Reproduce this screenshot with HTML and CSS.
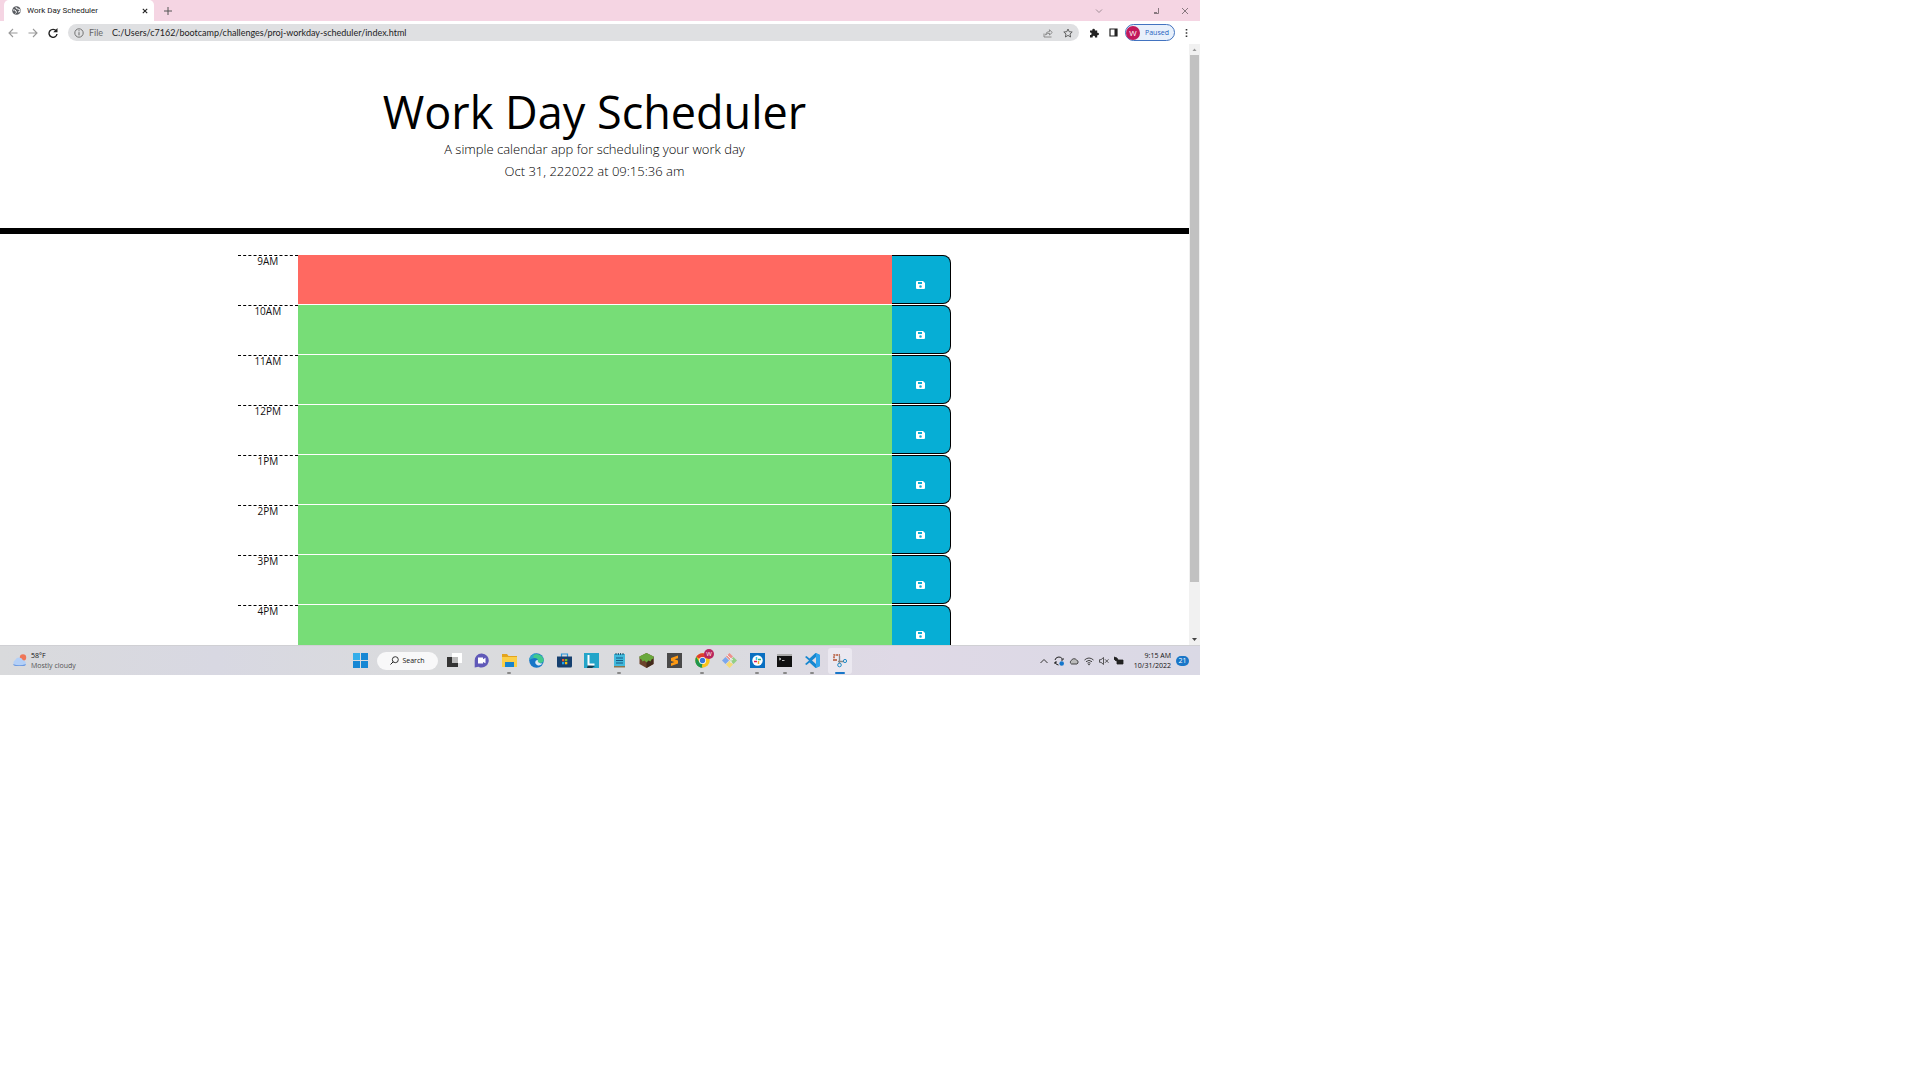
FILE: index.html
```html
<!DOCTYPE html>
<html lang="en">
<head>
<meta charset="utf-8">
<title>Work Day Scheduler</title>
<link rel="stylesheet" href="styles.css">
</head>
<body>
<svg class="defs" aria-hidden="true">
  <symbol id="save" viewBox="0 0 9 8"><path fill="#fff" fill-rule="evenodd" d="M1 0H7L9 2V7Q9 8 8 8H1Q0 8 0 7V1Q0 0 1 0ZM2 1V3H6V1ZM4.500 4.200A1.300 1.300 0 1 0 4.500 6.800A1.300 1.300 0 1 0 4.500 4.200Z"/></symbol>
</svg>
<div class="desktop">
  <div class="tabbar">
    <div class="tab">
      <svg class="i9" viewBox="0 0 9 9"><circle cx="4.500" cy="4.500" r="4.300" fill="#5a5d62"/><path d="M1 4Q3 3.500 4 5T3.500 7.500M4 1Q3.500 3 6 3T8 5.500L6 6" fill="none" stroke="#fff" stroke-width="1"/></svg>
      <span class="tab-title">Work Day Scheduler</span>
      <button class="plain" aria-label="Close tab"><svg class="i6" viewBox="0 0 6 6"><path d="M.8.8l4.400 4.400M5.200.8L.8 5.200" stroke="#222" stroke-width="1.100"/></svg></button>
    </div>
    <button class="plain new-tab" aria-label="New tab"><svg class="i8" viewBox="0 0 8 8"><path d="M4 0v8M0 4h8" stroke="#555" stroke-width="1"/></svg></button>
    <div class="window-buttons">
      <button class="plain" aria-label="Tab search"><svg class="i8" viewBox="0 0 8 8"><path d="M1 2.500l3 3 3-3" fill="none" stroke="#97868e" stroke-width=".9"/></svg></button>
      <button class="plain restore" aria-label="Restore"><svg class="i8" viewBox="0 0 8 8"><path d="M2 6.500h4.500V1M2 5.500h3" fill="none" stroke="#7c6d74" stroke-width=".9"/></svg></button>
      <button class="plain" aria-label="Close"><svg class="i8" viewBox="0 0 8 8"><path d="M1 1l6 6M7 1L1 7" stroke="#7c6d74" stroke-width=".9"/></svg></button>
    </div>
  </div>
  <div class="toolbar">
    <div class="nav">
      <button class="plain" aria-label="Back"><svg class="i10" viewBox="0 0 10 10"><path d="M9.500 5H1M5 1L1 5l4 4" fill="none" stroke="#999" stroke-width="1.100"/></svg></button>
      <button class="plain" aria-label="Forward"><svg class="i10" viewBox="0 0 10 10"><path d="M.5 5H9M5 1l4 4-4 4" fill="none" stroke="#999" stroke-width="1.100"/></svg></button>
      <button class="plain" aria-label="Reload"><svg class="i10" viewBox="0 0 10 10"><path d="M8.300 3A4 4 0 1 0 9 6" fill="none" stroke="#222" stroke-width="1.400"/><path d="M9.500 0v4.300H5.200z" fill="#222"/></svg></button>
    </div>
    <div class="address">
      <svg class="i10" viewBox="0 0 10 10"><circle cx="5" cy="5" r="4.200" fill="none" stroke="#666" stroke-width=".9"/><path d="M5 4.200v3.200M5 2.300v1" stroke="#666" stroke-width="1"/></svg>
      <span class="scheme">File</span>
      <input class="url" aria-label="Address" value="C:/Users/c7162/bootcamp/challenges/proj-workday-scheduler/index.html">
      <div class="page-actions">
        <svg class="i10" viewBox="0 0 10 10"><path d="M1 5.500V9h7.500M2.500 7Q3 3.500 6.500 3.500V1.700L9.200 4.500 6.500 7V5.300Q4 5.200 2.500 7Z" fill="none" stroke="#777" stroke-width=".8"/></svg>
        <svg class="i10" viewBox="0 0 10 10"><path d="M5 1l1.200 2.700 3 .3-2.200 2 .6 3L5 7.400 2.400 9 3 6 .8 4l3-.3z" fill="none" stroke="#555" stroke-width=".9"/></svg>
      </div>
    </div>
    <div class="extensions">
      <svg class="i10" viewBox="0 0 10 10"><path d="M1 2.500h2.300V2a1.300 1.300 0 0 1 2.600 0v.5h2.300v2.200h.5a1.200 1.200 0 0 1 0 2.500h-.5v2.300H6V9a1.200 1.200 0 0 0-2.400 0v.5H1V7h.4a1.200 1.200 0 0 0 0-2.400H1z" fill="#222"/></svg>
      <svg class="i9" viewBox="0 0 9 9"><path d="M1 1h7v7H1z" fill="none" stroke="#222" stroke-width="1.200"/><path d="M5.500 1H8v7H5.500z" fill="#222"/></svg>
    </div>
    <button class="profile"><span class="avatar">W</span>Paused</button>
    <button class="plain" aria-label="Menu"><svg class="dots" viewBox="0 0 3 10"><path d="M.7 1h1.600v1.600H.7zM.7 4.200h1.600v1.600H.7zM.7 7.400h1.600V9H.7z" fill="#333"/></svg></button>
  </div>
  <div class="viewport">
    <main class="page">
      <header class="hero">
        <h1>Work Day Scheduler</h1>
        <p>A simple calendar app for scheduling your work day</p>
        <p>Oct 31, 222022 at 09:15:36 am</p>
      </header>
      <div class="planner">
        <div class="row"><label class="hour" for="h9">9AM</label><textarea class="task now" id="h9"></textarea><button class="save" aria-label="Save 9AM"><svg class="disk"><use href="#save"/></svg></button></div>
        <div class="row"><label class="hour" for="h10">10AM</label><textarea class="task" id="h10"></textarea><button class="save" aria-label="Save 10AM"><svg class="disk"><use href="#save"/></svg></button></div>
        <div class="row"><label class="hour" for="h11">11AM</label><textarea class="task" id="h11"></textarea><button class="save" aria-label="Save 11AM"><svg class="disk"><use href="#save"/></svg></button></div>
        <div class="row"><label class="hour" for="h12">12PM</label><textarea class="task" id="h12"></textarea><button class="save" aria-label="Save 12PM"><svg class="disk"><use href="#save"/></svg></button></div>
        <div class="row"><label class="hour" for="h13">1PM</label><textarea class="task" id="h13"></textarea><button class="save" aria-label="Save 1PM"><svg class="disk"><use href="#save"/></svg></button></div>
        <div class="row"><label class="hour" for="h14">2PM</label><textarea class="task" id="h14"></textarea><button class="save" aria-label="Save 2PM"><svg class="disk"><use href="#save"/></svg></button></div>
        <div class="row"><label class="hour" for="h15">3PM</label><textarea class="task" id="h15"></textarea><button class="save" aria-label="Save 3PM"><svg class="disk"><use href="#save"/></svg></button></div>
        <div class="row"><label class="hour" for="h16">4PM</label><textarea class="task" id="h16"></textarea><button class="save" aria-label="Save 4PM"><svg class="disk"><use href="#save"/></svg></button></div>
      </div>
    </main>
    <div class="scrollbar">
      <svg class="arrow" viewBox="0 0 11 11"><path d="M3.500 7h4L5.500 4.500z" fill="#999"/></svg>
      <div class="track"><div class="thumb"></div></div>
      <svg class="arrow" viewBox="0 0 11 11"><path d="M3 4h5L5.500 7z" fill="#444"/></svg>
    </div>
  </div>
  <footer class="taskbar">
    <div class="weather">
      <svg class="i15" viewBox="0 0 15 15"><circle cx="11" cy="4.500" r="3.200" fill="#ef7657"/><path d="M3.500 13A3.300 3.300 0 0 1 3.200 7 4.300 4.300 0 0 1 11 7.200 3 3 0 0 1 12 13Z" fill="#b4d0f7"/><path d="M1 11Q7 13.500 14 11 13.500 13 12 13H3.500Q1.500 13 1 11" fill="#6d9ae0"/></svg>
      <div><div class="temp">58°F</div><div class="sky">Mostly cloudy</div></div>
    </div>
    <div class="apps">
      <button class="plain" aria-label="Start"><svg class="i15" viewBox="0 0 15 15"><path d="M0 0h7v7H0zM8 0h7v7H8zM0 8h7v7H0zM8 8h7v7H8z" fill="#1687d4"/><path d="M0 0h7v7H0z" fill="#35aeea"/></svg></button>
      <button class="search"><svg class="i9" viewBox="0 0 9 9"><circle cx="5.300" cy="3.700" r="3" fill="none" stroke="#222" stroke-width=".9"/><path d="M3.200 5.800L.5 8.500" stroke="#222"/></svg>Search</button>
      <div class="icons">
        <button class="app" aria-label="Task view"><svg class="i15" viewBox="0 0 15 15"><path d="M5 0h10v10H5z" fill="#fff"/><path d="M0 4h11v10H0z" fill="#333"/><path d="M5 4h6v6H5z" fill="#bbb"/></svg></button>
        <button class="app" aria-label="Chat"><svg class="i15" viewBox="0 0 15 15"><path d="M7.500.5a7 7 0 1 1-3 13.200L.7 14.500V8A7 7 0 0 1 7.500.5Z" fill="#6059b8"/><path d="M4 4.500h5v1.700l2.500-1.400v5.500L9 9v1.500H4z" fill="#fff"/></svg></button>
        <button class="app open" aria-label="File Explorer"><svg class="i15" viewBox="0 0 15 15"><path d="M0 1h5l1.500 2H15v11H0z" fill="#e4a41d"/><path d="M0 4h15v10H0z" fill="#fbcf48"/><path d="M3 9h9v5H3z" fill="#1583cf"/></svg></button>
        <button class="app" aria-label="Edge"><svg class="i15" viewBox="0 0 15 15"><circle cx="7.500" cy="7.500" r="7.300" fill="#1676c8"/><path d="M.4 7A7.300 7.300 0 0 1 14.800 7Q14.500 10 11 10 8.500 10 9 8 9 5 5.500 5T.4 7Z" fill="#42ca8c"/><path d="M.4 7A7 7 0 0 1 7 .3Q3 3 5 5 2 5 .4 7" fill="#2ea7cf"/><path d="M9 7.500Q8 10 13.500 10.500 11 13.500 8 12 5 10 7 7.500Q8.500 6.500 9 7.500" fill="#dce9f2"/></svg></button>
        <button class="app" aria-label="Store"><svg class="i15" viewBox="0 0 15 15"><path d="M4.500 4V1h6v3" fill="none" stroke="#2795d9" stroke-width="1.200"/><path d="M0 3.500h15V13q0 1.500-1.500 1.500h-12Q0 14.500 0 13z" fill="#16406f"/><path d="M5 6h2.300v2.300H5z" fill="#f15a2b"/><path d="M8 6h2.300v2.300H8z" fill="#7cbb2a"/><path d="M5 9h2.300v2.300H5z" fill="#1ea5e9"/><path d="M8 9h2.300v2.300H8z" fill="#fbbc0a"/></svg></button>
        <button class="app" aria-label="L"><svg class="i15" viewBox="0 0 15 15"><path d="M0 0h15v15H0z" fill="#23a5c9"/><path d="M4 11.500l7 1.500-3 2H3z" fill="#153e52"/><path d="M4.500 2v9.500h6" fill="none" stroke="#fff" stroke-width="2"/></svg></button>
        <button class="app open" aria-label="Notepad"><svg class="i15" viewBox="0 0 15 15"><path d="M2 1h11v13H2z" fill="#42b9dc"/><path d="M2 13h11v1.500H2z" fill="#8a744c"/><path d="M4 5h7M4 7.500h7M4 10h7" stroke="#145a83" stroke-width="1.100"/><path d="M4 0v2M6.300 0v2M8.600 0v2M11 0v2" stroke="#184f6a"/></svg></button>
        <button class="app" aria-label="Minecraft"><svg class="i15" viewBox="0 0 15 15"><path d="M7.500 0l7 3.500v7.500l-7 4-7-4V3.500z" fill="#6c432b"/><path d="M7.500 7.500v7.500l7-4V3.500z" fill="#42291b"/><path d="M7.500 0l7 3.500v2l-2 1-1 2-2-1-2 2-2-2-2 1-1-2-2-1v-2z" fill="#69a83c"/></svg></button>
        <button class="app" aria-label="Sublime Text"><svg class="i15" viewBox="0 0 15 15"><path d="M0 0h15v15H0z" fill="#494949"/><path d="M11 2.500v2.700L7.500 6.300 11 7.500v3L4 13v-2.700l3.500-1.200L4 8V5z" fill="#ff9a13"/></svg></button>
        <button class="app open" aria-label="Chrome"><svg class="i15" viewBox="0 0 15 15"><circle cx="7.500" cy="7.500" r="7.200" fill="#f8c51c"/><path d="M7.500 7.500L1.200 3.800A7.300 7.300 0 0 1 13.800 3.800Z" fill="#df3e31"/><path d="M1.200 3.800L7.500 14.700A7.300 7.300 0 0 1 1.200 3.800" fill="#20964e"/><path d="M4.500 9l3 1.500-1 4A7.300 7.300 0 0 1 1 10z" fill="#20964e"/><circle cx="7.500" cy="7.500" r="3.500" fill="#fff"/><circle cx="7.500" cy="7.500" r="2.700" fill="#3478db"/></svg><span class="badge">W</span></button>
        <button class="app" aria-label="Git"><svg class="i15" viewBox="0 0 15 15"><path d="M7.500 0L11 3.500 7.500 7 4 3.500z" fill="#ee918b"/><path d="M3.500 4L7 7.500 3.500 11 0 7.500z" fill="#7ba7ed"/><path d="M11.500 4L15 7.500 11.500 11 8 7.500z" fill="#93cf84"/><path d="M7.500 8l3.500 3.500L7.500 15 4 11.500z" fill="#f4da76"/><path d="M5 2l4 4v4M8 5l3 2" stroke="#eee" fill="none"/></svg></button>
        <button class="app open" aria-label="Slack"><svg class="i15" viewBox="0 0 15 15"><path d="M0 0h15v15H0z" fill="#096fc1"/><circle cx="7.500" cy="7.500" r="5.200" fill="#fff"/><path d="M6.500 4v3" stroke="#36c5f0" stroke-width="1.500"/><path d="M8 6.500h3" stroke="#2eb67d" stroke-width="1.500"/><path d="M4 8.500h3" stroke="#e01e5a" stroke-width="1.500"/><path d="M8.500 8v3" stroke="#ecb22e" stroke-width="1.500"/></svg></button>
        <button class="app open" aria-label="Command Prompt"><svg class="i15" viewBox="0 0 15 15"><path d="M0 1h15v13H0z" fill="#111"/><path d="M0 1h15v2H0z" fill="#ababab"/><path d="M2 5l2 1-2 1M5 7.500h2.500" fill="none" stroke="#eee" stroke-width=".8"/></svg></button>
        <button class="app open" aria-label="Visual Studio Code"><svg class="i15" viewBox="0 0 15 15"><path d="M10.500 0L15 2v11l-4.500 2-6-5.500L1.500 12 0 11l4-3.500L0 4l1.500-1 3 2.500zM11 4L7 7.500 11 11z" fill="#1787d0" fill-rule="evenodd"/><path d="M11 0l4 2v11l-4 2z" fill="#2fa4ec"/></svg></button>
        <button class="app open active" aria-label="Snipping Tool"><svg class="i15" viewBox="0 0 15 15"><path d="M2 8V2h6M3 7h2" fill="none" stroke="#b3502f" stroke-width="1.500" stroke-dasharray="2 .7"/><path d="M7.500 3v7.500M6 8.500h6" stroke="#888" stroke-width="1.300"/><circle cx="7.500" cy="12" r="1.800" fill="none" stroke="#238bc7"/><circle cx="13" cy="8" r="1.600" fill="none" stroke="#238bc7"/></svg></button>
      </div>
    </div>
    <div class="tray">
      <svg class="i10" viewBox="0 0 10 10"><path d="M1.500 7L5 3.500 8.500 7" fill="none" stroke="#333"/></svg>
      <svg class="i10" viewBox="0 0 10 10"><path d="M1 4A4 4 0 0 1 8 2.500M9 2v2H7M1 6a4 4 0 0 0 3.500 3M1 8V6h2" fill="none" stroke="#222"/><circle cx="7.700" cy="7.500" r="2.300" fill="#1476cc"/></svg>
      <svg class="i10" viewBox="0 0 10 10"><path d="M2.500 8A2 2 0 0 1 2.300 4.500 3 3 0 0 1 7.500 4 2.200 2.200 0 0 1 8 8Z" fill="#bbb" stroke="#333" stroke-width=".9"/></svg>
      <svg class="i10" viewBox="0 0 10 10"><path d="M.5 4Q5 0 9.500 4M2 5.700Q5 3 8 5.700M3.500 7.200Q5 6 6.500 7.200" fill="none" stroke="#333" stroke-width=".9"/><circle cx="5" cy="8.500" r=".8" fill="#333"/></svg>
      <svg class="i10" viewBox="0 0 10 10"><path d="M.5 3.700H2L4.500 1.500v7L2 6.300H.5zM6 3.300l3.500 3.500M9.500 3.300L6 6.800" fill="none" stroke="#333" stroke-width=".8"/></svg>
      <svg class="i10" viewBox="0 0 10 10"><path d="M3 4h6v4H3zM0 1l3 1 1 2-2 1-2-2z" fill="#222" stroke="#222" stroke-width=".8"/></svg>
      <div class="clock"><div>9:15 AM</div><div>10/31/2022</div></div>
      <span class="count">21</span>
    </div>
  </footer>
</div>
</body>
</html>
```
FILE: styles.css
```css
* { box-sizing: border-box; }
body { margin: 0; background: #fff; font-family: "Open Sans", sans-serif; color: #111; }
h1, p { margin: 0; font-weight: 400; }
svg { display: block; flex: none; }
button { font-family: inherit; cursor: pointer; }
.defs { display: none; }
.plain { border: 0; padding: 0; background: none; }
.i6 { width: 6px; height: 6px; }
.i8 { width: 8px; height: 8px; }
.i9 { width: 9px; height: 9px; }
.i10 { width: 10px; height: 10px; }
.i15 { width: 15px; height: 15px; }

.desktop { display: flex; flex-direction: column; width: 100%; max-width: 1200px; aspect-ratio: 16 / 9; overflow: hidden; }

.tabbar { display: flex; align-items: center; height: 21px; flex: none; padding-left: 4px; background: #f5d5e3; }
.tab { display: flex; align-items: center; gap: 6px; width: 150px; height: 21px; padding: 0 6px 0 8px; border-radius: 5px 5px 0 0; background: #fff; }
.tab-title { flex: 1; font: 8px/12px Roboto, sans-serif; color: #222; }
.new-tab { margin-left: 10px; }
.window-buttons { display: flex; gap: 21px; margin-left: auto; padding-right: 11px; }
.restore { margin-left: 28px; }

.toolbar { display: flex; align-items: center; gap: 10px; height: 23px; flex: none; padding: 0 12px 0 8px; }
.nav { display: flex; gap: 10px; }
.address { display: flex; flex: 1; align-items: center; gap: 5px; height: 17px; padding: 0 6px; border-radius: 9px; background: #dfe0e2; }
.scheme { width: 18px; font: 9px/12px Lato, sans-serif; color: #666; }
.url { flex: 1; min-width: 0; border: 0; padding: 0; background: none; font: 9px/12px Lato, sans-serif; color: #222; }
.page-actions, .extensions { display: flex; align-items: center; gap: 10px; }
.extensions { margin-right: -3px; }
.profile { display: flex; align-items: center; gap: 5px; width: 50px; height: 17px; border: 1px solid #4273c0; border-radius: 9px; padding: 0; background: #e8f0fb; font-size: 7px; color: #1e62c0; }
.avatar { width: 14px; height: 14px; flex: none; border-radius: 50%; background: #c2185b; color: #fff; font-size: 8px; line-height: 14px; text-align: center; }
.dots { width: 3px; height: 10px; }

.viewport { display: flex; flex: 1; min-height: 0; overflow: hidden; }
.page { flex: 1; }
.hero { height: 190px; padding-top: 42px; border-bottom: 6px solid #000; text-align: center; color: #000; }
.hero h1 { font-size: 45px; line-height: 52px; }
.hero p { font-size: 13px; font-weight: 300; line-height: 22px; }
.planner { display: grid; gap: 1px; width: 60%; margin: 21px auto 0; }
.row { display: grid; grid-template-columns: 60px 1fr 59px; height: 49px; }
.hour { border-top: 1px dashed #000; font-size: 10px; line-height: 11px; text-align: center; }
.task { display: block; width: 100%; height: 49px; border: 0; padding: 4px; resize: none; background: #77dd77; font: 12px/16px "Open Sans", sans-serif; }
.task.now { background: #ff6961; }
.save { display: grid; place-items: center; border: 1px solid #000; border-left: 0; border-radius: 0 8px 8px 0; padding: 11px 1px 0 0; background: #06aed5; }
.disk { width: 9px; height: 8px; }

.scrollbar { display: flex; flex-direction: column; width: 11px; background: #f1f1f1; }
.arrow { width: 11px; height: 11px; }
.track { flex: 1; padding: 0 1px; }
.thumb { height: 91%; background: #c1c1c1; }

.taskbar { display: grid; grid-template-columns: 353px auto 1fr; align-items: center; height: 30px; flex: none; border-top: 1px solid #d0d0d4; background: linear-gradient(90deg, #d9dadc, #d8d8e2 18%, #dadbdd 35%, #dadbdf 60%, #dfd9e6 75%, #dad9e5); }
.weather { display: flex; align-items: center; gap: 4px; padding-left: 12px; font-size: 7px; line-height: 10px; }
.sky { color: #555; }
.apps { display: flex; align-items: center; }
.search { display: flex; align-items: center; justify-content: center; gap: 3px; width: 61px; height: 18px; margin: 0 4px 0 9px; border: 0; border-radius: 9px; padding: 0; background: #f8f8f9; font-size: 7px; color: #111; }
.icons { display: flex; justify-content: space-between; width: 410px; }
.app { position: relative; display: grid; place-items: center; width: 24px; height: 26px; border: 0; border-radius: 3px; padding: 0; background: none; }
.app.open::after { content: ""; position: absolute; bottom: 0; left: 50%; width: 4px; height: 2px; margin-left: -2px; border-radius: 1px; background: #888; }
.app.active { background: #ebe8f0; }
.app.active::after { width: 10px; margin-left: -5px; background: #1976c8; }
.badge { position: absolute; top: 1px; right: 0; width: 10px; height: 10px; border-radius: 50%; background: #b9265e; color: #fff; font-size: 6px; line-height: 10px; text-align: center; }
.tray { display: flex; align-items: center; justify-content: flex-end; gap: 5px; padding-right: 11px; }
.clock { width: 42px; font-size: 7px; line-height: 10px; text-align: right; }
.count { width: 13px; height: 10px; border-radius: 5px; background: #1976c8; color: #fff; font-size: 7px; line-height: 10px; text-align: center; }
```
